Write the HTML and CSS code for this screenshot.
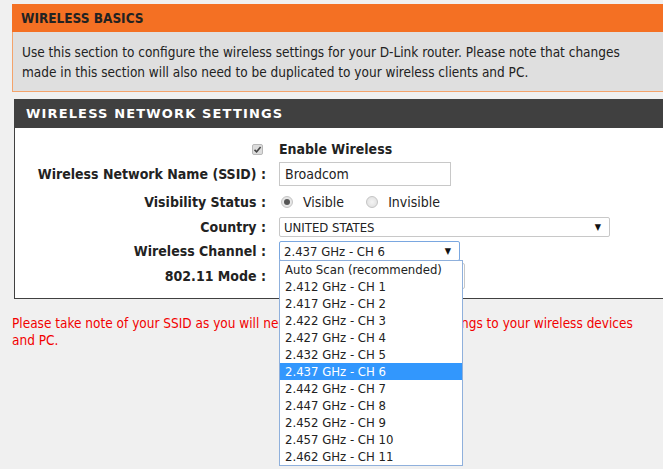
FILE: index.html
```html
<!DOCTYPE html>
<html>
<head>
<meta charset="utf-8">
<link rel="stylesheet" href="styles.css">
</head>
<body>
<div class="page">
  <div class="box-basics">
    <div class="head-orange">WIRELESS BASICS</div>
    <div class="desc"><p class="desc-text">Use this section to configure the wireless settings for your D-Link router. Please note that changes made in this section will also need to be duplicated to your wireless clients and PC.</p></div>
  </div>

  <div class="box-settings">
    <div class="head-dark">WIRELESS NETWORK SETTINGS</div>
    <div class="form">
      <div class="lbl"><span class="check"><svg viewBox="0 0 11 11" width="11" height="11"><path d="M2.5 5.8 L4.6 7.8 L8.6 3" fill="none" stroke="#444" stroke-width="1.6"/></svg></span></div>
      <div class="ctl strong">Enable Wireless</div>

      <div class="lbl">Wireless Network Name (SSID) :</div>
      <div class="ctl"><div class="input">Broadcom</div></div>

      <div class="lbl">Visibility Status :</div>
      <div class="ctl"><span class="radio on"></span><span class="opt">Visible</span><span class="radio"></span><span class="opt">Invisible</span></div>

      <div class="lbl">Country :</div>
      <div class="ctl"><div class="select country"><span>UNITED STATES</span><span class="arrow">▼</span></div></div>

      <div class="lbl">Wireless Channel :</div>
      <div class="ctl">
        <div class="select channel"><span>2.437 GHz - CH 6</span><span class="arrow">▼</span></div>
      </div>

      <div class="lbl">802.11 Mode :</div>
      <div class="ctl"><div class="select mode"></div></div>
    </div>
    <ul class="dropdown">
      <li>Auto Scan (recommended)</li>
      <li>2.412 GHz - CH 1</li>
      <li>2.417 GHz - CH 2</li>
      <li>2.422 GHz - CH 3</li>
      <li>2.427 GHz - CH 4</li>
      <li>2.432 GHz - CH 5</li>
      <li class="sel">2.437 GHz - CH 6</li>
      <li>2.442 GHz - CH 7</li>
      <li>2.447 GHz - CH 8</li>
      <li>2.452 GHz - CH 9</li>
      <li>2.457 GHz - CH 10</li>
      <li>2.462 GHz - CH 11</li>
    </ul>
  </div>

  <p class="note">Please take note of your SSID as you will need to duplicate the same settings to your wireless devices and PC.</p>
</div>
</body>
</html>
```
FILE: styles.css
```css
html {
  overflow: hidden;
  background: #f0f0f0;
}
body {
  margin: 0;
  padding: 0;
  min-height: 469px;
  background: #f0f0f0;
  font-family: "DejaVu Sans Condensed", "Liberation Sans", sans-serif;
  font-size: 13px;
  color: #222;
}
.page {
  width: 700px;
  min-height: 465px;
  padding: 4px 0 0 12px;
}
.head-orange {
  height: 28px;
  line-height: 29px;
  background: #f47023;
  color: #222;
  font-weight: bold;
  font-size: 13.5px;
  padding-left: 9px;
}
.desc {
  background: #dfdfdf;
  border-left: 1px solid #f4a36b;
  border-bottom: 1px solid #f4a36b;
  padding: 10px 9px 9px;
}
.desc-text {
  margin: 0;
  width: 616px;
  line-height: 20px;
  font-size: 13.5px;
  color: #222;
}
.box-settings {
  margin: 7px 0 0 2px;
  position: relative;
  z-index: 1;
}
.head-dark {
  height: 29px;
  line-height: 30px;
  background: #404040;
  color: #fff;
  font-family: "DejaVu Sans", sans-serif;
  font-weight: bold;
  font-size: 13px;
  letter-spacing: 1.15px;
  padding-left: 12px;
}
.form {
  background: #fff;
  border-left: 1px solid #404040;
  border-bottom: 1px solid #404040;
  display: grid;
  grid-template-columns: 251px 1fr;
  grid-template-rows: 24px 26px 30px 20px 28px 22px;
  column-gap: 13px;
  padding: 9px 0 11px;
  align-items: center;
}
.lbl {
  text-align: right;
  font-weight: bold;
  font-size: 14px;
  color: #222;
  display: flex;
  justify-content: flex-end;
  align-items: center;
}
.ctl {
  display: flex;
  align-items: center;
  font-size: 14px;
}
.strong { font-weight: bold; }
.check {
  display: inline-block;
  width: 11px;
  height: 11px;
  box-sizing: border-box;
  border: 1px solid #b8b8b8;
  background: #dcdcdc;
  border-radius: 2px;
  margin-right: 3px;
}
.check svg { display: block; margin: -1px; }
.input {
  width: 172px;
  height: 24px;
  box-sizing: border-box;
  border: 1px solid #c8c8c8;
  padding-left: 5px;
  line-height: 22px;
  font-size: 14px;
}
.radio {
  width: 12px;
  height: 12px;
  box-sizing: border-box;
  border-radius: 50%;
  border: 1px solid #c4c4c4;
  background: radial-gradient(circle, #f4f4f4 0, #dcdcdc 100%);
  margin-left: 2px;
  position: relative;
}
.radio.on::after {
  content: "";
  position: absolute;
  left: 2px; top: 2px;
  width: 6px; height: 6px;
  border-radius: 50%;
  background: #555;
}
.opt { margin: 0 20px 0 10px; }
.select {
  height: 20px;
  box-sizing: border-box;
  border: 1px solid #c8c8c8;
  border-radius: 2px;
  display: flex;
  align-items: center;
  justify-content: space-between;
  padding: 0 8px 0 4px;
  font-size: 13px;
  background: #fff;
}
.arrow { font-size: 9px; color: #111; }
.country { width: 331px; }
.channel { width: 181px; border-color: #7aa7e0; }
.mode { width: 186px; height: 26px; }
.dropdown {
  position: absolute;
  left: 265px;
  top: 161px;
  width: 182px;
  margin: 0;
  padding: 0;
  list-style: none;
  background: #fff;
  border: 1px solid #8fb0dc;
  font-size: 13px;
}
.dropdown li {
  height: 17px;
  line-height: 17px;
  padding-left: 5px;
  color: #222;
}
.dropdown li.sel {
  background: #3297fd;
  color: #fff;
}
.note {
  margin: 16px 0 0 0;
  color: #f20000;
  font-size: 13.5px;
  line-height: 17px;
  width: 640px;
}
```
